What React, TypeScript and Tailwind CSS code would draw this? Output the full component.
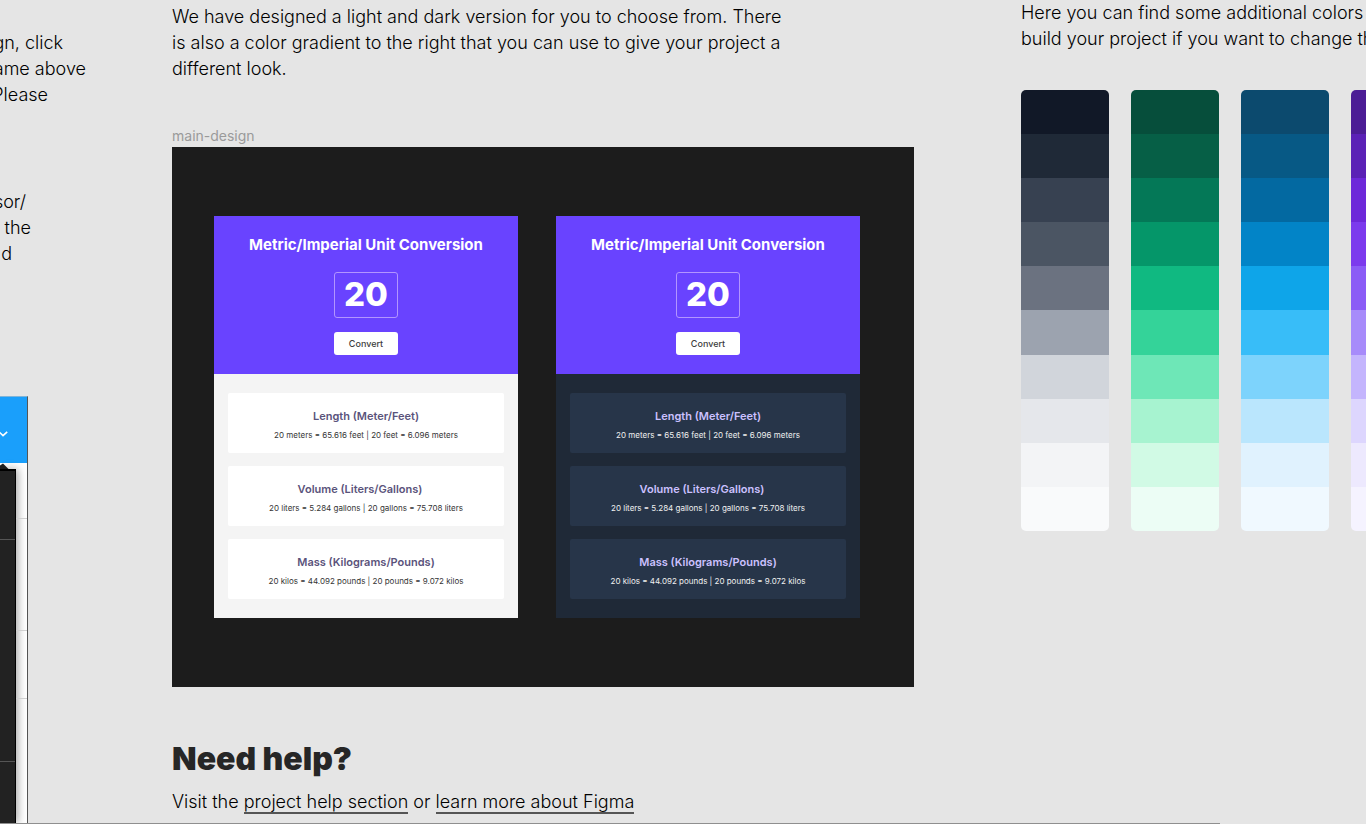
const body = "text-[18px] leading-[26px] font-light text-black";

const conversions = [
  { title: "Length (Meter/Feet)", text: "20 meters = 65.616 feet | 20 feet = 6.096 meters", inset: "" },
  { title: "Volume (Liters/Gallons)", text: "20 liters = 5.284 gallons | 20 gallons = 75.708 liters", inset: "pr-3" },
  { title: "Mass (Kilograms/Pounds)", text: "20 kilos = 44.092 pounds | 20 pounds = 9.072 kilos", inset: "" },
];

const palettes = [
  ["bg-[#111827]", "bg-[#1f2937]", "bg-[#374151]", "bg-[#4b5563]", "bg-[#6b7280]", "bg-[#9ca3af]", "bg-[#d1d5db]", "bg-[#e5e7eb]", "bg-[#f3f4f6]", "bg-[#f9fafb]"],
  ["bg-[#064e3b]", "bg-[#065f46]", "bg-[#047857]", "bg-[#059669]", "bg-[#10b981]", "bg-[#34d399]", "bg-[#6ee7b7]", "bg-[#a7f3d0]", "bg-[#d1fae5]", "bg-[#ecfdf5]"],
  ["bg-[#0c4a6e]", "bg-[#075985]", "bg-[#0369a1]", "bg-[#0284c7]", "bg-[#0ea5e9]", "bg-[#38bdf8]", "bg-[#7dd3fc]", "bg-[#bae6fd]", "bg-[#e0f2fe]", "bg-[#f0f9ff]"],
  ["bg-[#4c1d95]", "bg-[#5b21b6]", "bg-[#6d28d9]", "bg-[#7c3aed]", "bg-[#8b5cf6]", "bg-[#a78bfa]", "bg-[#c4b5fd]", "bg-[#ddd6fe]", "bg-[#ede9fe]", "bg-[#f5f3ff]"],
];

function ConverterCard({ dark = false }: { dark?: boolean }) {
  return (
    <section className={dark ? "bg-[#1f2937]" : "bg-[#f4f4f4]"}>
      <div className="flex flex-col items-center bg-[#6943ff] pt-[18px] pb-[19px] text-white">
        <h2 className="text-[15px] leading-[22px] font-bold">Metric/Imperial Unit Conversion</h2>
        <input
          aria-label={dark ? "Value to convert, dark version" : "Value to convert, light version"}
          defaultValue="20"
          className="mt-4 h-[46px] w-16 rounded-[3px] border border-[#b295ff] bg-transparent text-center text-[33px] font-extrabold text-white outline-none"
        />
        <button type="button" className="mt-[14px] h-[23px] w-16 rounded-[3px] bg-white text-[9px] font-medium text-[#3d3d3d]">
          Convert
        </button>
      </div>
      <div className="flex flex-col gap-[13px] px-[14px] pt-[19px] pb-[19px]">
        {conversions.map((c) => (
          <article
            key={c.title}
            className={dark ? "rounded-[2px] bg-[#273549] pt-4 pb-3 text-center" : "rounded-[2px] bg-white pt-4 pb-3 text-center"}
          >
            <h3 className={`text-[11px] leading-[14px] font-semibold ${c.inset} ${dark ? "text-[#ccc1ff]" : "text-[#5a537b]"}`}>
              {c.title}
            </h3>
            <p className={dark ? "mt-[6px] text-[8px] leading-[12px] text-[#f0f0f0]" : "mt-[6px] text-[8px] leading-[12px] text-[#353535]"}>
              {c.text}
            </p>
          </article>
        ))}
      </div>
    </section>
  );
}

function MenuPreview() {
  return (
    <div className="mt-[129px] flex w-[28px] flex-1 flex-col border-t border-r border-t-[#7fb4d8] border-r-[#555] bg-white">
      <div className="flex h-[66px] items-center bg-[#1a9ffb]">
        <svg viewBox="0 0 9 8" className="mt-2 h-2 w-[9px]" fill="none" stroke="white" strokeWidth="1.6">
          <path d="M-1 1.8 3 5.6 7.2 1.8" />
        </svg>
      </div>
      <div className="flex flex-1 flex-col">
        <svg viewBox="0 0 10 6" className="h-[6px] w-[10px]" fill="#202020">
          <path d="M0 2.5 3 0.6 8.5 6H0Z" />
        </svg>
        <div className="flex flex-1">
          <div className="flex w-4 flex-col border-t-2 border-r border-black bg-[#222] shadow-[2px_0_8px_rgba(0,0,0,0.35)]">
            <div className="h-[69px] border-b border-[#555]" />
            <div className="h-[222px] border-b border-[#555]" />
          </div>
          <div className="flex-1">
            <div className="h-[50px] border-b border-[#d0d0d0]" />
            <div className="h-[112px] border-b border-[#d0d0d0]" />
            <div className="h-[68px] border-b border-[#d0d0d0]" />
          </div>
        </div>
      </div>
    </div>
  );
}

export default function App() {
  return (
    <div className="flex min-h-screen flex-col overflow-hidden bg-[#e5e5e5] font-['Inter',sans-serif]">
      <div className="flex flex-1">
        <aside className="flex w-[172px] shrink-0 flex-col pt-[30px]">
          <p className={`${body} whitespace-nowrap`}>
            <span className="flex w-[63px] justify-end">gn, click</span>
            <span className="flex w-[86px] justify-end">ame above</span>
            <span className="flex w-12 justify-end">Please</span>
          </p>
          <p className={`${body} mt-[81px] whitespace-nowrap`}>
            <span className="flex w-[26px] justify-end">sor/</span>
            <span className="flex w-[31px] justify-end">the</span>
            <span className="flex w-3 justify-end">d</span>
          </p>
          <MenuPreview />
        </aside>

        <main className="min-w-0 flex-1 pt-1">
          <p className={body}>
            We have designed a light and dark version for you to choose from. There
            <br />
            is also a color gradient to the right that you can use to give your project a
            <br />
            different look.
          </p>
          <div className="mt-[45px] text-[14px] leading-[18px] text-[#9a9a9a]">main-design</div>
          <div className="mt-[2px] grid grid-cols-2 gap-[38px] bg-[#1c1c1c] pt-[69px] pr-[54px] pb-[69px] pl-[42px]">
            <ConverterCard />
            <ConverterCard dark />
          </div>
          <h1 className="mt-[52px] text-[32px] leading-[40px] font-black text-[#262626]">Need help?</h1>
          <p className={`${body} mt-[10px]`}>
            Visit the{" "}
            <a href="#help" className="border-b-2 border-[#555]">project help section</a> or{" "}
            <a href="#figma" className="border-b-2 border-[#555]">learn more about Figma</a>
          </p>
        </main>

        <aside className="ml-[107px] w-[345px] shrink-0 overflow-hidden">
          <p className={`${body} whitespace-nowrap`}>
            Here you can find some additional colors
            <br />
            build your project if you want to change th
          </p>
          <div className="mt-[38px] flex gap-[22px]">
            {palettes.map((shades) => (
              <div key={shades[0]} className="flex h-[441px] w-[88px] shrink-0 flex-col overflow-hidden rounded-[5px]">
                {shades.map((s) => (
                  <div key={s} className={`flex-1 ${s}`} />
                ))}
              </div>
            ))}
          </div>
        </aside>
      </div>
      <div className="mr-[146px] h-px bg-[#8f8f8f]" />
    </div>
  );
}
